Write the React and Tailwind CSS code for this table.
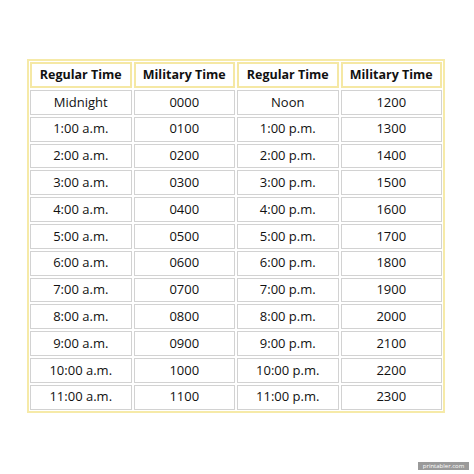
const rows = [
  ["Midnight", "0000", "Noon", "1200"],
  ["1:00 a.m.", "0100", "1:00 p.m.", "1300"],
  ["2:00 a.m.", "0200", "2:00 p.m.", "1400"],
  ["3:00 a.m.", "0300", "3:00 p.m.", "1500"],
  ["4:00 a.m.", "0400", "4:00 p.m.", "1600"],
  ["5:00 a.m.", "0500", "5:00 p.m.", "1700"],
  ["6:00 a.m.", "0600", "6:00 p.m.", "1800"],
  ["7:00 a.m.", "0700", "7:00 p.m.", "1900"],
  ["8:00 a.m.", "0800", "8:00 p.m.", "2000"],
  ["9:00 a.m.", "0900", "9:00 p.m.", "2100"],
  ["10:00 a.m.", "1000", "10:00 p.m.", "2200"],
  ["11:00 a.m.", "1100", "11:00 p.m.", "2300"],
];

const headers = ["Regular Time", "Military Time", "Regular Time", "Military Time"];

export default function App() {
  return (
    <div
      className="relative h-[474px] w-[474px] bg-white text-[#111]"
      style={{ fontFamily: '"Comic Sans MS", "Open Sans", sans-serif' }}
    >
      <div className="ml-[27px] w-[418px] pt-[59px]">
        <div className="border-2 border-[#f6eaa8] p-px">
          <div className="grid grid-cols-4 gap-[2px]">
            {headers.map((h, i) => (
              <div
                key={i}
                className="flex h-[26px] items-center justify-center border-2 border-[#f5e8a4] text-[12.5px] font-bold"
              >
                {h}
              </div>
            ))}
            {rows.map((r) =>
              r.map((c, j) => (
                <div
                  key={r[0] + j}
                  className="flex h-[24.8px] items-center justify-center border border-[#d2d2d2] text-[13px]"
                >
                  {c}
                </div>
              ))
            )}
          </div>
        </div>
      </div>
      <div className="absolute left-[418px] top-[462px] flex h-[8px] w-[51px] items-center justify-center bg-[#9a9a9a] text-[6px] leading-none text-white">
        printabler.com
      </div>
    </div>
  );
}
